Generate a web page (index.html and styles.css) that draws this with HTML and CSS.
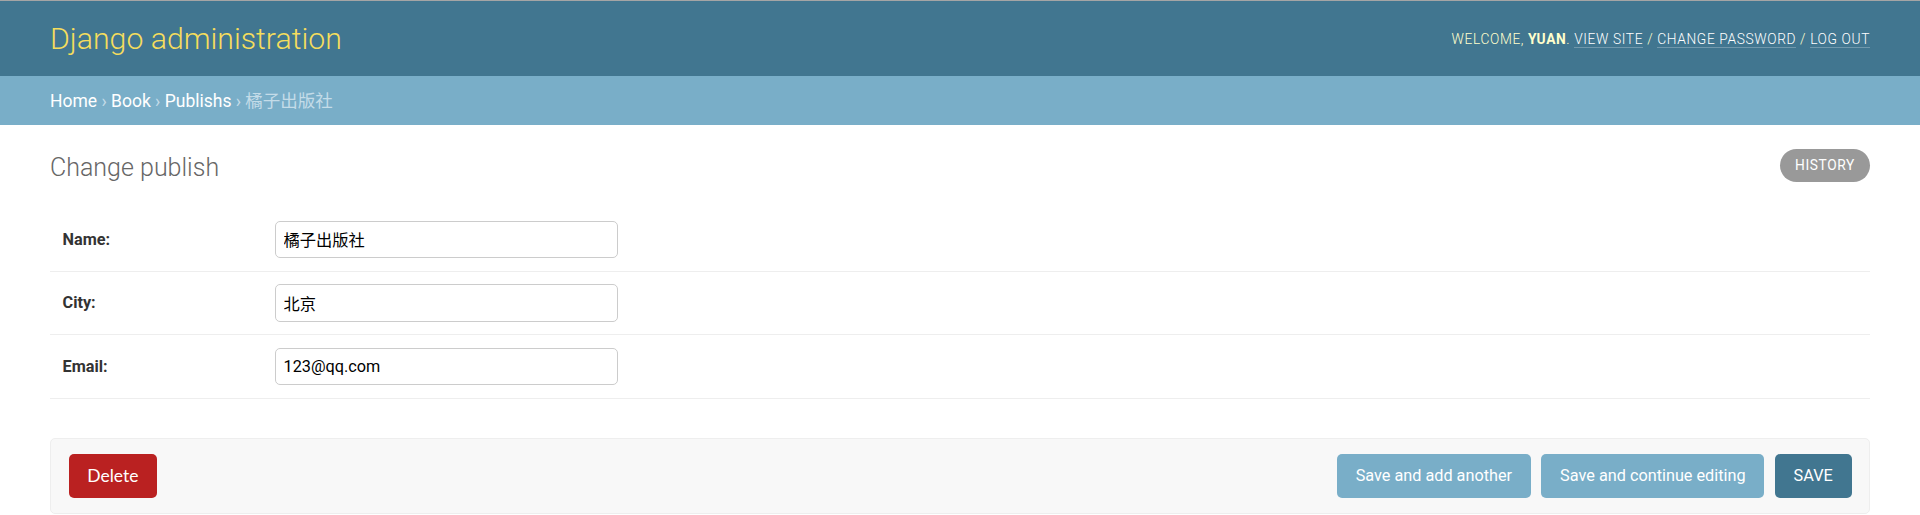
FILE: index.html
```html
<!DOCTYPE html>
<html lang="zh-hans">
<head>
<meta charset="utf-8">
<title>Change publish | Django site admin</title>
<link rel="stylesheet" href="styles.css">
</head>
<body>
<div class="container">
  <header class="header">
    <h1 class="site-name"><a href="#">Django administration</a></h1>
    <div class="user-tools">
      Welcome, <strong>yuan</strong>. <a href="#">View site</a> / <a href="#">Change password</a> / <a href="#">Log out</a>
    </div>
  </header>
  <div class="breadcrumbs">
    <a href="#">Home</a> › <a href="#">Book</a> › <a href="#">Publishs</a> › 橘子出版社
  </div>
  <div class="content">
    <div class="title-row">
      <h1 class="page-title">Change publish</h1>
      <ul class="object-tools">
        <li><a href="#" class="historylink">History</a></li>
      </ul>
    </div>
    <form class="change-form">
      <fieldset class="module">
        <div class="form-row">
          <label class="field-label" for="id_name">Name:</label>
          <input class="text-field" type="text" id="id_name" value="橘子出版社">
        </div>
        <div class="form-row">
          <label class="field-label" for="id_city">City:</label>
          <input class="text-field" type="text" id="id_city" value="北京">
        </div>
        <div class="form-row">
          <label class="field-label" for="id_email">Email:</label>
          <input class="text-field" type="text" id="id_email" value="123@qq.com">
        </div>
      </fieldset>
      <div class="submit-row">
        <a href="#" class="deletelink">Delete</a>
        <div class="submit-actions">
          <input type="submit" class="btn" value="Save and add another">
          <input type="submit" class="btn" value="Save and continue editing">
          <input type="submit" class="btn btn-default" value="Save">
        </div>
      </div>
    </form>
  </div>
</div>
</body>
</html>
```
FILE: styles.css
```css
html, body {
  margin: 0;
  padding: 0;
}
body {
  font-family: Roboto, "Noto Sans CJK SC", "Liberation Sans", sans-serif;
  font-size: 17.5px;
  color: #333;
  background: #fff;
}
a {
  text-decoration: none;
}

.header {
  display: flex;
  justify-content: space-between;
  align-items: center;
  height: 50px;
  padding: 12.5px 50px;
  background: #417690;
  border-top: 1px solid #a5a5a5;
  color: #ffc;
}
.site-name {
  margin: 0;
  font-size: 30.25px;
  font-weight: 300;
  line-height: 50px;
}
.site-name a {
  color: #f5dd5d;
}
.user-tools {
  font-size: 13.75px;
  font-weight: 300;
  letter-spacing: 0.625px;
  text-transform: uppercase;
  color: #ffc;
  line-height: 20px;
}
.user-tools strong {
  font-weight: 700;
}
.user-tools a {
  color: #fff;
  border-bottom: 1px solid rgba(255, 255, 255, 0.25);
}

.breadcrumbs {
  background: #79aec8;
  padding: 12.5px 50px;
  line-height: 24px;
  font-size: 17.5px;
  color: #c4dce8;
}
.breadcrumbs a {
  color: #fff;
}

.content {
  padding: 24px 50px 0;
}
.title-row {
  display: flex;
  justify-content: space-between;
  align-items: flex-start;
}
.page-title {
  margin: 4px 0 26px;
  font-size: 25px;
  font-weight: 300;
  color: #666;
  line-height: 29px;
}
.object-tools {
  list-style: none;
  margin: 0;
  padding: 0;
}
.historylink {
  display: block;
  padding: 4px 15px;
  line-height: 25px;
  font-size: 13.75px;
  font-weight: 400;
  letter-spacing: 0.625px;
  text-transform: uppercase;
  color: #fff;
  background: #999;
  border-radius: 18.75px;
}

.module {
  margin: 0 0 39px;
  padding: 0;
  border: none;
}
.form-row {
  display: flex;
  align-items: center;
  padding: 12.5px;
  border-bottom: 1px solid #eee;
  font-size: 16.25px;
}
.field-label {
  width: 200px;
  padding-right: 12.5px;
  font-weight: 700;
  color: #333;
}
.text-field {
  box-sizing: border-box;
  width: 342.5px;
  height: 37.5px;
  margin: 0;
  padding: 0 7.5px;
  border: 1px solid #ccc;
  border-radius: 5px;
  font-family: Roboto, "Noto Sans CJK SC", sans-serif;
  font-size: 16.25px;
  color: #000;
  background: #fff;
}

.submit-row {
  display: flex;
  justify-content: space-between;
  align-items: center;
  padding: 15px 17.5px;
  background: #f8f8f8;
  border: 1px solid #eee;
  border-radius: 5px;
}
.deletelink {
  display: block;
  padding: 0 18.75px;
  height: 44px;
  line-height: 44px;
  box-sizing: border-box;
  background: #ba2121;
  border-radius: 5px;
  color: #fff;
  font-family: Lato, "Noto Sans", sans-serif;
  font-size: 17.5px;
}
.submit-actions {
  display: flex;
  gap: 10.5px;
}
.btn {
  height: 44px;
  margin: 0;
  padding: 0 18.75px;
  border: none;
  border-radius: 5px;
  background: #79aec8;
  color: #fff;
  font-family: Roboto, sans-serif;
  font-size: 16.25px;
  font-weight: 400;
  cursor: pointer;
}
.btn-default {
  background: #417690;
  text-transform: uppercase;
}
```
